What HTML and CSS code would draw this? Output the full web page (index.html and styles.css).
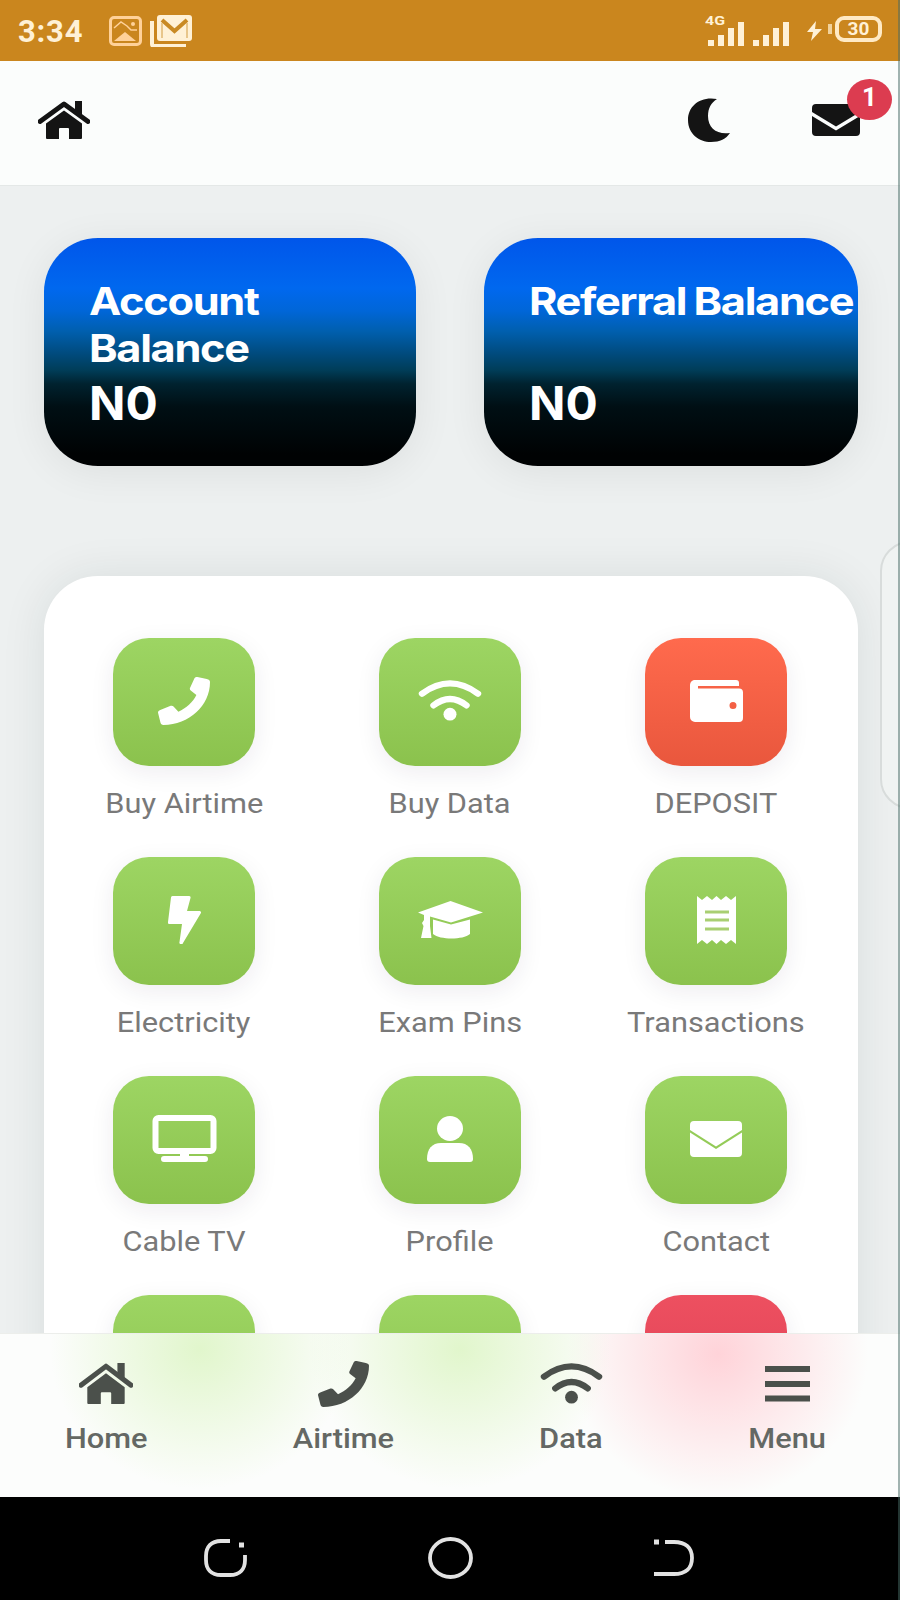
FILE: index.html
```html
<!DOCTYPE html>
<html lang="en">
<head>
  <title>Dashboard</title>
  <meta charset="UTF-8">
  <meta name="viewport" content="width=device-width, initial-scale=1.0">
  <link rel="stylesheet" href="styles.css">
</head>
<body>
  <svg width="0" height="0" class="defs">
    <symbol id="home" viewBox="0 0 52 38" preserveAspectRatio="none">
      <path d="M2 20.5L26 3l24 17.5" fill="none" stroke="currentColor" stroke-width="4.8" stroke-linecap="round" stroke-linejoin="round"/>
      <path d="M37 0h7v14l-7-5zM8 22.5L26 9.500l18 13V37a1 1 0 0 1-1 1H31V28a1 1 0 0 0-1-1h-8a1 1 0 0 0-1 1v10H9a1 1 0 0 1-1-1z"/>
    </symbol>
    <symbol id="phone" viewBox="0 0 512 512" preserveAspectRatio="none">
      <path d="M480 22l-92-21c-16-4-24 2-29 13l-44 103c-4 10-1 21 7 28l56 48c-36 76.700-98.900 140.500-177.200 177.200l-48-56c-7-8-18-11-28-7L22 351c-15 6-25 16-21 34l23 100c4 17 12 27 30 27 252 0 458-206 458-458 0-18-12-27-32-32z"/>
    </symbol>
    <symbol id="wifi" viewBox="0 0 64 42" preserveAspectRatio="none">
      <path d="M4 14Q32-7 60 14M15.500 26Q32 13 48.500 26" fill="none" stroke="currentColor" stroke-width="6.400" stroke-linecap="round"/>
      <ellipse cx="32" cy="35" rx="6.500" ry="6.500"/>
    </symbol>
    <symbol id="mail" viewBox="0 0 52 36" preserveAspectRatio="none">
      <path d="M4 0h44a4 4 0 0 1 4 4v5L26 25.500 0 9V4a4 4 0 0 1 4-4zM0 11.500L26 28l26-16.500V32a4 4 0 0 1-4 4H4a4 4 0 0 1-4-4z"/>
    </symbol>
  </svg>

  <div class="statusbar">
    <span class="time">3:34</span>
    <svg class="st-pic" width="33" height="30" viewBox="0 0 33 30"><rect x="1.500" y="1.500" width="30" height="27" rx="3.500" fill="none" stroke="#ffd199" stroke-width="3"/><path d="M5 12l7-6 6 4 4 4h6" fill="none" stroke="#ffd199" stroke-width="1.500"/><path d="M5 25l6-5 5-4 11 9z" fill="#ffd199"/><circle cx="24" cy="8" r="2" fill="#ffd199"/></svg>
    <svg class="st-mail" width="42" height="32" viewBox="0 0 42 32"><path d="M2 6v23a2 2 0 0 0 2 2h32" fill="none" stroke="#fff1d6" stroke-width="4"/><rect x="7" y="0" width="35" height="26" rx="3" fill="#fff1d6"/><path d="M12 5l12.500 11L37 5" fill="none" stroke="#c98a24" stroke-width="4"/><path d="M12 8v15M37 8v15" stroke="#e8c68b" stroke-width="2"/></svg>
    <svg class="st-signal" width="84" height="34" viewBox="0 0 84 34" fill="#ffe6b8"><text x="0" y="11" font-size="13" textLength="20" lengthAdjust="spacingAndGlyphs">4G</text><rect x="3" y="26" width="6" height="6"/><rect x="13" y="21" width="6" height="11"/><rect x="23" y="14" width="6" height="18"/><rect x="33" y="8" width="6" height="24"/><rect x="48" y="26" width="6" height="6"/><rect x="58" y="21" width="6" height="11"/><rect x="68" y="14" width="6" height="18"/><rect x="78" y="8" width="6" height="24"/></svg>
    <svg class="st-bolt" width="15" height="20" viewBox="0 0 15 20"><path d="M9 0L0 11h6L4 20l11-12H8z" fill="#fff1d6"/></svg>
    <div class="battery">30</div>
  </div>

  <header class="topbar">
    <svg class="ic-home"><use href="#home"/></svg>
    <svg class="ic-moon" viewBox="0 0 42 44" preserveAspectRatio="none"><path d="M29 1C12-2 0 8 0 22s11 22 23 22c9 0 15-3 19-9-13 2-22-5-22-17C20 10 23 5 29 1z"/></svg>
    <div class="inbox">
      <svg class="ic-inbox" viewBox="0 0 48 32"><path d="M4 0h40a4 4 0 0 1 4 4v4L24 22.500 0 8V4a4 4 0 0 1 4-4zM0 12l24 14.500L48 12v16a4 4 0 0 1-4 4H4a4 4 0 0 1-4-4z"/></svg>
      <span class="badge">1</span>
    </div>
  </header>

  <main>
    <section class="balances">
      <div class="balance">
        <h3><span>Account<br>Balance</span></h3>
        <p><span>N0</span></p>
      </div>
      <div class="balance">
        <h3><span>Referral Balance</span></h3>
        <p><span>N0</span></p>
      </div>
    </section>

    <section class="services">
      <a class="service"><div class="tile"><svg width="52" height="48"><use href="#phone"/></svg></div><span>Buy Airtime</span></a>
      <a class="service"><div class="tile"><svg width="64" height="41"><use href="#wifi"/></svg></div><span>Buy Data</span></a>
      <a class="service"><div class="tile orange"><svg width="53" height="42" viewBox="0 0 53 42"><path d="M6 0h40a3 3 0 0 1 3 3v3H8v2.500h41a4 4 0 0 1 4 4V38a4 4 0 0 1-4 4H5a5 5 0 0 1-5-5V5a5 5 0 0 1 6-5zM43 22a3.500 3.500 0 1 0 0 7 3.500 3.500 0 0 0 0-7z" fill-rule="evenodd"/></svg></div><span>DEPOSIT</span></a>

      <a class="service"><div class="tile"><svg width="33" height="48" viewBox="0 0 33 48"><path d="M4.500 0H21a1.500 1.500 0 0 1 1.500 2L19 15h12.500a1.500 1.500 0 0 1 1.300 2.300L15 47a1.800 1.800 0 0 1-3.500-1L14 28H1.500A1.500 1.500 0 0 1 0 26L3 1.500A1.500 1.500 0 0 1 4.500 0z"/></svg></div><span>Electricity</span></a>
      <a class="service"><div class="tile"><svg width="65" height="38" viewBox="0 0 65 38"><path d="M32.500 0L65 11.500 33 21.500 12 15.500V25l1.500 12H3l2.500-12L4 22l2-3v-5L0 11.500zM15 18.500L33 23.500l19-5V33c-7 6-30 6-37 0z"/></svg></div><span>Exam Pins</span></a>
      <a class="service"><div class="tile"><svg width="39" height="48" viewBox="0 0 39 48"><path d="M0 0l5 4 5-4 5 4 4.500-4L24 4l5-4 5 4 5-4v48l-5-4-5 4-5-4-4.500 4-4.500-4-5 4-5-4-5 4z"/><path d="M8 16h24M8 24h24M8 33h24" stroke="#a9cf72" stroke-width="3"/></svg></div><span>Transactions</span></a>

      <a class="service"><div class="tile"><svg width="65" height="47" viewBox="0 0 65 47"><rect x="3.500" y="3" width="58" height="33" rx="3" fill="none" stroke="#fff" stroke-width="6"/><path d="M28 37h9v4h16a3 3 0 0 1 0 6H12a3 3 0 0 1 0-6h16z"/></svg></div><span>Cable TV</span></a>
      <a class="service"><div class="tile"><svg width="46" height="46" viewBox="0 0 46 46"><ellipse cx="23" cy="12.500" rx="13" ry="12.500"/><path d="M14 27h18c9 0 14 6 14 16a3 3 0 0 1-3 3H3a3 3 0 0 1-3-3c0-10 5-16 14-16z"/></svg></div><span>Profile</span></a>
      <a class="service"><div class="tile"><svg width="52" height="36"><use href="#mail"/></svg></div><span>Contact</span></a>

      <a class="service"><div class="tile"></div></a>
      <a class="service"><div class="tile"></div></a>
      <a class="service"><div class="tile red"></div></a>
    </section>
  </main>

  <div class="edge-handle"></div>

  <nav class="tabbar">
    <a><svg width="54" height="41"><use href="#home"/></svg><span>Home</span></a>
    <a><svg width="51" height="46"><use href="#phone"/></svg><span>Airtime</span></a>
    <a><svg width="63" height="41"><use href="#wifi"/></svg><span>Data</span></a>
    <a><svg width="45" height="36" viewBox="0 0 45 36"><path d="M0 3h45M0 18h45M0 32.500h45" stroke="currentColor" stroke-width="6"/></svg><span>Menu</span></a>
  </nav>

  <div class="sysnav">
    <svg width="46" height="40" viewBox="0 0 46 40"><path d="M27 3H18C8 3 3 9 3 18v4c0 9 5 15 15 15h9c10 0 15-6 15-15v-5"/><path d="M36 7h5" stroke-width="5"/></svg>
    <svg width="46" height="42" viewBox="0 0 46 42"><ellipse cx="22.500" cy="21" rx="20.500" ry="19"/></svg>
    <svg width="42" height="40" viewBox="0 0 42 40"><path d="M12 4h9c12 0 18 6 18 16s-6 16-18 16H1"/><path d="M1 4h5" stroke-width="5"/></svg>
  </div>
  <div class="screen-edge"></div>
</body>
</html>
```

FILE: styles.css
```css
*{box-sizing:border-box;}
body{
  margin:0;
  width:900px;
  height:1600px;
  overflow:hidden;
  position:relative;
  display:flex;
  flex-direction:column;
  background:#edf0f0;
  font-family:Roboto, "Liberation Sans", sans-serif;
}
.defs{position:absolute;}
svg{display:block;fill:currentColor;flex:none;}

/* status bar */
.statusbar{
  height:61px;
  flex:none;
  padding:0 18px;
  display:flex;
  align-items:center;
  background:#ca861e;
  color:#fff1d6;
}
.time{
  width:91px;
  padding-top:2px;
  font-size:31px;
  font-weight:700;
  letter-spacing:.8px;
}
.st-mail{margin-left:8px;}
.st-signal{margin-left:auto;font-weight:700;}
.st-bolt{margin-left:18px;}
.battery{
  position:relative;
  width:47px;
  height:26px;
  margin:-4px 0 0 13px;
  border:4px solid #ffeac5;
  border-radius:9px;
  font-size:19px;
  line-height:18px;
  font-weight:700;
  text-align:center;
}
.battery::before{
  content:"";
  position:absolute;
  left:-11px;
  top:4px;
  width:4px;
  height:10px;
  background:#f1d29c;
}

/* header */
.topbar{
  height:125px;
  flex:none;
  display:flex;
  align-items:center;
  padding:0 40px 7px 38px;
  background:#fbfdfc;
  border-bottom:1px solid #e4e8e7;
  color:#141414;
}
.ic-home{width:52px;height:38px;}
.ic-moon{width:42px;height:44px;margin-left:auto;}
.inbox{position:relative;margin-left:82px;}
.ic-inbox{width:48px;height:32px;}
.badge{
  position:absolute;
  left:35px;
  top:-25px;
  width:45px;
  height:41px;
  border-radius:50%;
  background:#dc3c50;
  color:#fff;
  font-size:26px;
  font-weight:700;
  line-height:37px;
  text-align:center;
}

main{flex:1;padding:52px 42px 0 44px;}

.balances{
  display:grid;
  grid-template-columns:372px 374px;
  justify-content:space-between;
}
.balance{
  height:228px;
  padding:40px 0 0 45px;
  border-radius:54px;
  background:linear-gradient(#0056ea,#0068ef 22%,#0066d8 32%,#005fae 41%,#004a7c 51%,#003d58 58%,#00222f 64%,#000f14 74%,#000203 95%);
  box-shadow:0 6px 40px rgba(0,0,0,.07);
  color:#fff;
  font-family:Inter, sans-serif;
  font-weight:700;
}
.balance h3{
  height:97px;
  margin:0;
  font-size:38px;
  line-height:47px;
  letter-spacing:-1.15px;
  word-spacing:-1.5px;
  white-space:nowrap;
}
.balance p{margin:0;font-size:46px;line-height:56px;}
.balance span{display:inline-block;transform-origin:left;}
.balance h3 span{transform:scaleX(1.14);}
.balance p span{transform:scaleX(1.04);}

.services{
  height:1100px;
  margin-top:110px;
  padding:62px 7px 0;
  display:grid;
  grid-template-columns:repeat(3,266px);
  grid-auto-rows:219px;
  background:#fff;
  border-radius:54px;
  box-shadow:0 0 46px rgba(20,40,40,.09);
}
.service{
  display:flex;
  flex-direction:column;
  align-items:center;
  color:#797979;
}
.tile{
  width:142px;
  height:128px;
  padding-bottom:3px;
  display:flex;
  align-items:center;
  justify-content:center;
  border-radius:36px;
  background:linear-gradient(#9dd563,#8bc24d);
  box-shadow:0 6px 24px rgba(40,30,60,.08);
  color:#fff;
}
.tile.orange{background:linear-gradient(#ff6a4d,#e9573d);}
.tile.red{background:linear-gradient(#ed5060,#df3f55);}
.service span,
.tabbar span{
  display:block;
  font-size:27px;
  line-height:32px;
  white-space:nowrap;
  transform:scaleX(1.14);
}
.service span{margin-top:22px;}

/* one ui edge panel handle */
.edge-handle{
  position:absolute;
  left:880px;
  top:541px;
  width:60px;
  height:268px;
  border:2px solid #d8dcdb;
  border-radius:30px;
  background:#f0f3f2;
}

.tabbar{
  position:absolute;
  left:0;
  right:0;
  bottom:103px;
  height:164px;
  padding:10px 74px 0 65px;
  display:grid;
  grid-template-columns:82px 101px 64px 77px;
  justify-content:space-between;
  background:
    radial-gradient(150px 140px at 200px 15px,#e1f6cc,rgba(225,246,204,0)),
    radial-gradient(150px 140px at 460px 15px,#e1f6cc,rgba(225,246,204,0)),
    radial-gradient(150px 145px at 718px 20px,#ffd3d9,rgba(255,211,217,0)),
    #fcfdfc;
  border-top:1px solid #eceeeb;
  color:#4b504b;
}
.tabbar a{
  height:111px;
  display:flex;
  flex-direction:column;
  align-items:center;
}
.tabbar svg{margin:auto 0;}
.tabbar span{flex:none;font-weight:500;color:#646864;}

.sysnav{
  position:absolute;
  left:0;
  right:0;
  bottom:0;
  height:103px;
  padding:18px 205px 0 203px;
  display:flex;
  align-items:center;
  justify-content:space-between;
  background:#000;
}
.sysnav svg{fill:none;stroke:#e2e2e2;stroke-width:3.8;}
.screen-edge{
  position:absolute;
  right:0;
  top:0;
  bottom:0;
  width:2px;
  background:rgba(70,105,100,.5);
}
```
